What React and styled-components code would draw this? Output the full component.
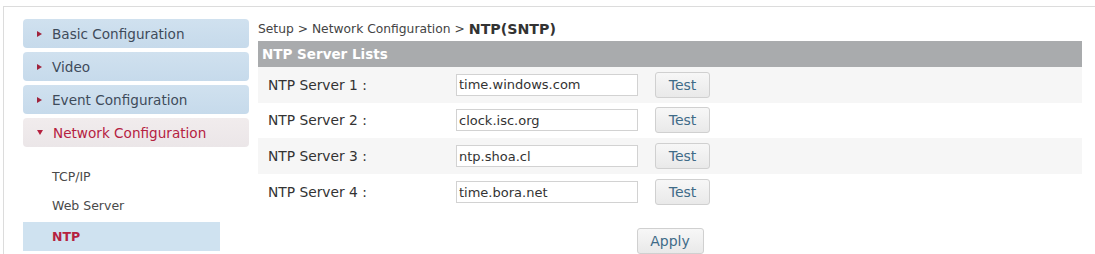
import React from 'react'
import styled, {createGlobalStyle} from 'styled-components'

const GlobalStyle = createGlobalStyle`
  html, body {
    margin: 0;
    padding: 0;
    background: #fff;
    font-family: "DejaVu Sans", Verdana, sans-serif;
  }
`

const Frame = styled.div`
  margin: 6px 0 0 3px;
  height: 248px;
  border-top: 1px solid #dcdcdc;
  border-left: 1px solid #dcdcdc;
  display: flex;
  gap: 9px;
  box-sizing: border-box;
  overflow: hidden;
`

const Sidebar = styled.nav`
  width: 226px;
  padding: 12px 0 0 19px;
  display: flex;
  flex-direction: column;
  flex-shrink: 0;
`

const MenuItem = styled.div`
  height: 29px;
  margin-bottom: 4px;
  border-radius: 4px;
  display: flex;
  align-items: center;
  padding-left: 14px;
  font-size: 13.6px;
  color: ${p => (p.$open ? '#b5213f' : '#3e4b5a')};
  background: ${p =>
    p.$open
      ? 'linear-gradient(#f1eced, #ebe6e8)'
      : 'linear-gradient(#d0e1ef, #c6daeb)'};
`

const Arrow = styled.span`
  display: inline-block;
  width: 0;
  height: 0;
  margin-right: 10px;
  ${p =>
    p.$down
      ? `border-left: 3.5px solid transparent;
         border-right: 3.5px solid transparent;
         border-top: 5px solid #b5213f;`
      : `border-top: 3.5px solid transparent;
         border-bottom: 3.5px solid transparent;
         border-left: 5px solid #a0233c;`}
`

const SubMenu = styled.div`
  margin-top: 11px;
  display: flex;
  flex-direction: column;
`

const SubItem = styled.div`
  width: 168px;
  height: 29px;
  display: flex;
  align-items: center;
  padding-left: 29px;
  font-size: 12.5px;
  color: ${p => (p.$active ? '#b5213f' : '#4a4a4a')};
  font-weight: ${p => (p.$active ? 'bold' : 'normal')};
  background: ${p => (p.$active ? '#cfe2f0' : 'transparent')};
  margin-top: ${p => (p.$active ? '2px' : '0')};
`

const Main = styled.main`
  width: 824px;
  padding-top: 10px;
  display: flex;
  flex-direction: column;
`

const Breadcrumb = styled.div`
  height: 24px;
  display: flex;
  align-items: center;
  font-size: 12.3px;
  color: #444;
  b {
    font-size: 14.2px;
    color: #333;
    margin-left: 4px;
  }
`

const Header = styled.div`
  height: 26px;
  background: #a9abad;
  color: #fff;
  font-weight: bold;
  font-size: 13.5px;
  display: flex;
  align-items: center;
  padding-left: 4px;
`

const Row = styled.div`
  height: 36px;
  display: flex;
  align-items: center;
  padding-left: 10px;
  background: ${p => (p.$shade ? '#f6f6f6' : '#fff')};
`

const Label = styled.div`
  width: 188px;
  font-size: 13.8px;
  color: #333;
`

const Field = styled.input`
  width: 182px;
  height: 22px;
  box-sizing: border-box;
  border: 1px solid #d2d2d2;
  padding: 0 2px;
  font-family: "DejaVu Sans", Verdana, sans-serif;
  font-size: 13px;
  color: #333;
  background: #fff;
  margin-right: 17px;
`

const Button = styled.button`
  width: ${p => p.$w || 55}px;
  height: 26px;
  border: 1px solid #d0d0d0;
  border-radius: 3px;
  background: linear-gradient(#f7f7f7, #e9e9e9);
  color: #3f6b88;
  font-family: "DejaVu Sans", Verdana, sans-serif;
  font-size: 14px;
  padding: 0;
`

const Footer = styled.div`
  display: flex;
  justify-content: center;
  padding-top: 18px;
`

const servers = ['time.windows.com', 'clock.isc.org', 'ntp.shoa.cl', 'time.bora.net']

export default function App() {
  return (
    <>
      <GlobalStyle />
      <Frame>
        <Sidebar>
          <MenuItem><Arrow />Basic Configuration</MenuItem>
          <MenuItem><Arrow />Video</MenuItem>
          <MenuItem><Arrow />Event Configuration</MenuItem>
          <MenuItem $open><Arrow $down />Network Configuration</MenuItem>
          <SubMenu>
            <SubItem>TCP/IP</SubItem>
            <SubItem>Web Server</SubItem>
            <SubItem $active>NTP</SubItem>
          </SubMenu>
        </Sidebar>
        <Main>
          <Breadcrumb>
            Setup &gt; Network Configuration &gt;<b>NTP(SNTP)</b>
          </Breadcrumb>
          <Header>NTP Server Lists</Header>
          {servers.map((s, i) => (
            <Row key={s} $shade={i % 2 === 0}>
              <Label>NTP Server {i + 1} :</Label>
              <Field defaultValue={s} />
              <Button>Test</Button>
            </Row>
          ))}
          <Footer>
            <Button $w={67}>Apply</Button>
          </Footer>
        </Main>
      </Frame>
    </>
  )
}
